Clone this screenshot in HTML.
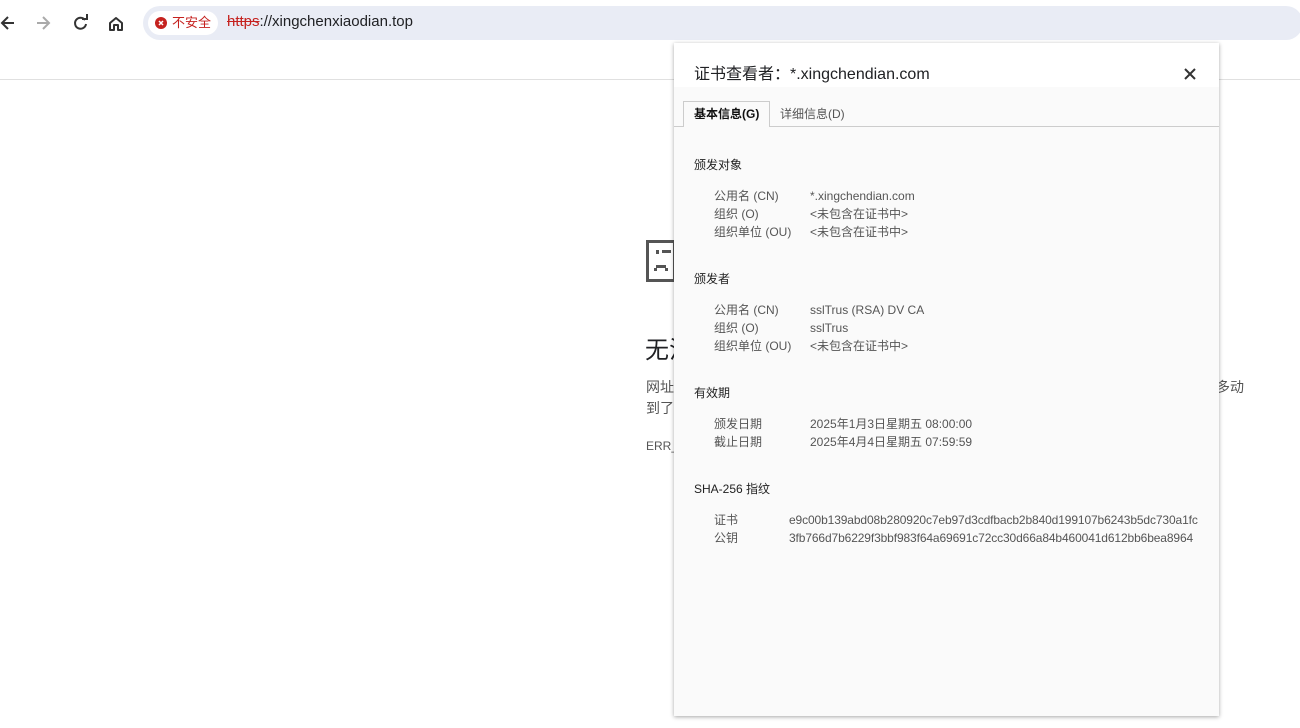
<!DOCTYPE html>
<html><head><meta charset="utf-8"><style>
*{margin:0;padding:0;box-sizing:border-box}
body{width:1300px;height:728px;background:#fff;position:relative;overflow:hidden;font-family:"Liberation Sans","Noto Sans CJK SC",sans-serif;color:#202124}
.abs{position:absolute}
.bar{left:0;top:0;width:1300px;height:80px;border-bottom:1px solid #e0e0e0}
.omni{left:143px;top:6px;width:1160px;height:34px;background:#e9ecf5;border-radius:17px}
.chip{left:148px;top:11px;width:70px;height:24px;background:#fff;border-radius:12px}
.dlg{left:674px;top:43px;width:545px;height:673px;background:#fafafa;box-shadow:0 1px 4px rgba(0,0,0,.35)}
.hdr{position:absolute;left:0;top:0;width:545px;height:44px;background:#fff}
.t{position:absolute;font-size:12px;line-height:16px;color:#333;white-space:nowrap}
.g{color:#555}
.h{letter-spacing:-0.12px}
</style></head><body>
<div class="abs bar"></div>
<svg class="abs" style="left:0;top:14px" width="130" height="18" viewBox="0 0 130 18">
<path d="M14 9H2M8 3L2 9l6 6" stroke="#333" stroke-width="2" fill="none"/>
<path d="M37 9h12M43 3l6 6-6 6" stroke="#aaa" stroke-width="2" fill="none"/>
<path d="M85 6a5.5 5.5 0 1 0 1 4" stroke="#333" stroke-width="2" fill="none"/><path d="M82 5h5V0" stroke="#333" stroke-width="2" fill="none"/>
<path d="M110 16V9l6-5 6 5v7h-4v-5h-4v5z" stroke="#333" stroke-width="2" fill="none" stroke-linejoin="round"/>
</svg>
<div class="abs omni"></div>
<div class="abs chip"></div>
<svg class="abs" style="left:155px;top:17px" width="12" height="12"><circle cx="6" cy="6" r="6" fill="#c5221f"/><path d="M4 4l4 4M8 4l-4 4" stroke="#fff" stroke-width="1.5"/></svg>
<div class="abs" style="left:172px;top:14px;font-size:13px;line-height:18px;color:#c5221f">不安全</div>
<div class="abs" style="left:227px;top:13px;font-size:15px;line-height:18px;color:#202124"><span style="color:#c5221f;text-decoration:line-through">https</span>://xingchenxiaodian.top</div>
<svg class="abs" style="left:646px;top:240px" width="30" height="42"><path d="M1.5 1.5h27v39h-27z" fill="none" stroke="#555" stroke-width="3"/><rect x="10" y="10" width="3" height="4" fill="#555"/><rect x="16" y="10" width="9" height="3" fill="#555"/><rect x="10" y="25" width="10" height="3" fill="#555"/><rect x="8" y="28" width="3" height="3" fill="#555"/><rect x="19" y="28" width="3" height="3" fill="#555"/></svg>
<div class="abs" style="left:645px;top:330px;font-size:24px">无法</div>
<div class="abs" style="left:646px;top:377px;font-size:14px;color:#555;line-height:21px">网址<br>到了</div>
<div class="abs" style="left:1216px;top:377px;font-size:14px;color:#555">多动</div>
<div class="abs" style="left:646px;top:439px;font-size:12px;color:#555">ERR_</div>
<div class="abs dlg">
<div class="hdr"></div>
<div class="t" style="left:20px;top:22px;font-size:16px;line-height:20px;color:#202124">证书查看者：*.xingchendian.com</div>
<svg style="position:absolute;left:510px;top:25px" width="12" height="12"><path d="M1 1l10 10M11 1L1 11" stroke="#333" stroke-width="2"/></svg>
<div style="position:absolute;left:0;top:83px;width:545px;height:1px;background:#ccc"></div>
<div style="position:absolute;left:9px;top:58px;width:87px;height:26px;border:1px solid #ccc;border-bottom:none;background:#fafafa"></div>
<div class="t" style="left:20px;top:63px;color:#111;font-weight:bold">基本信息(G)</div>
<div class="t g" style="left:106px;top:63px">详细信息(D)</div>
<div class="t" style="left:20px;top:114px;color:#222">颁发对象</div>
<div class="t g" style="left:40px;top:145px">公用名 (CN)</div><div class="t g" style="left:136px;top:145px">*.xingchendian.com</div>
<div class="t g" style="left:40px;top:163px">组织 (O)</div><div class="t g" style="left:136px;top:163px">&lt;未包含在证书中&gt;</div>
<div class="t g" style="left:40px;top:181px">组织单位 (OU)</div><div class="t g" style="left:136px;top:181px">&lt;未包含在证书中&gt;</div>
<div class="t" style="left:20px;top:228px;color:#222">颁发者</div>
<div class="t g" style="left:40px;top:259px">公用名 (CN)</div><div class="t g" style="left:136px;top:259px">sslTrus (RSA) DV CA</div>
<div class="t g" style="left:40px;top:277px">组织 (O)</div><div class="t g" style="left:136px;top:277px">sslTrus</div>
<div class="t g" style="left:40px;top:295px">组织单位 (OU)</div><div class="t g" style="left:136px;top:295px">&lt;未包含在证书中&gt;</div>
<div class="t" style="left:20px;top:342px;color:#222">有效期</div>
<div class="t g" style="left:40px;top:373px">颁发日期</div><div class="t g" style="left:136px;top:373px">2025年1月3日星期五 08:00:00</div>
<div class="t g" style="left:40px;top:391px">截止日期</div><div class="t g" style="left:136px;top:391px">2025年4月4日星期五 07:59:59</div>
<div class="t" style="left:20px;top:438px;color:#222">SHA-256 指纹</div>
<div class="t g" style="left:40px;top:469px">证书</div><div class="t g h" style="left:115px;top:469px">e9c00b139abd08b280920c7eb97d3cdfbacb2b840d199107b6243b5dc730a1fc</div>
<div class="t g" style="left:40px;top:487px">公钥</div><div class="t g h" style="left:115px;top:487px">3fb766d7b6229f3bbf983f64a69691c72cc30d66a84b460041d612bb6bea8964</div>
</div>
</body></html>
